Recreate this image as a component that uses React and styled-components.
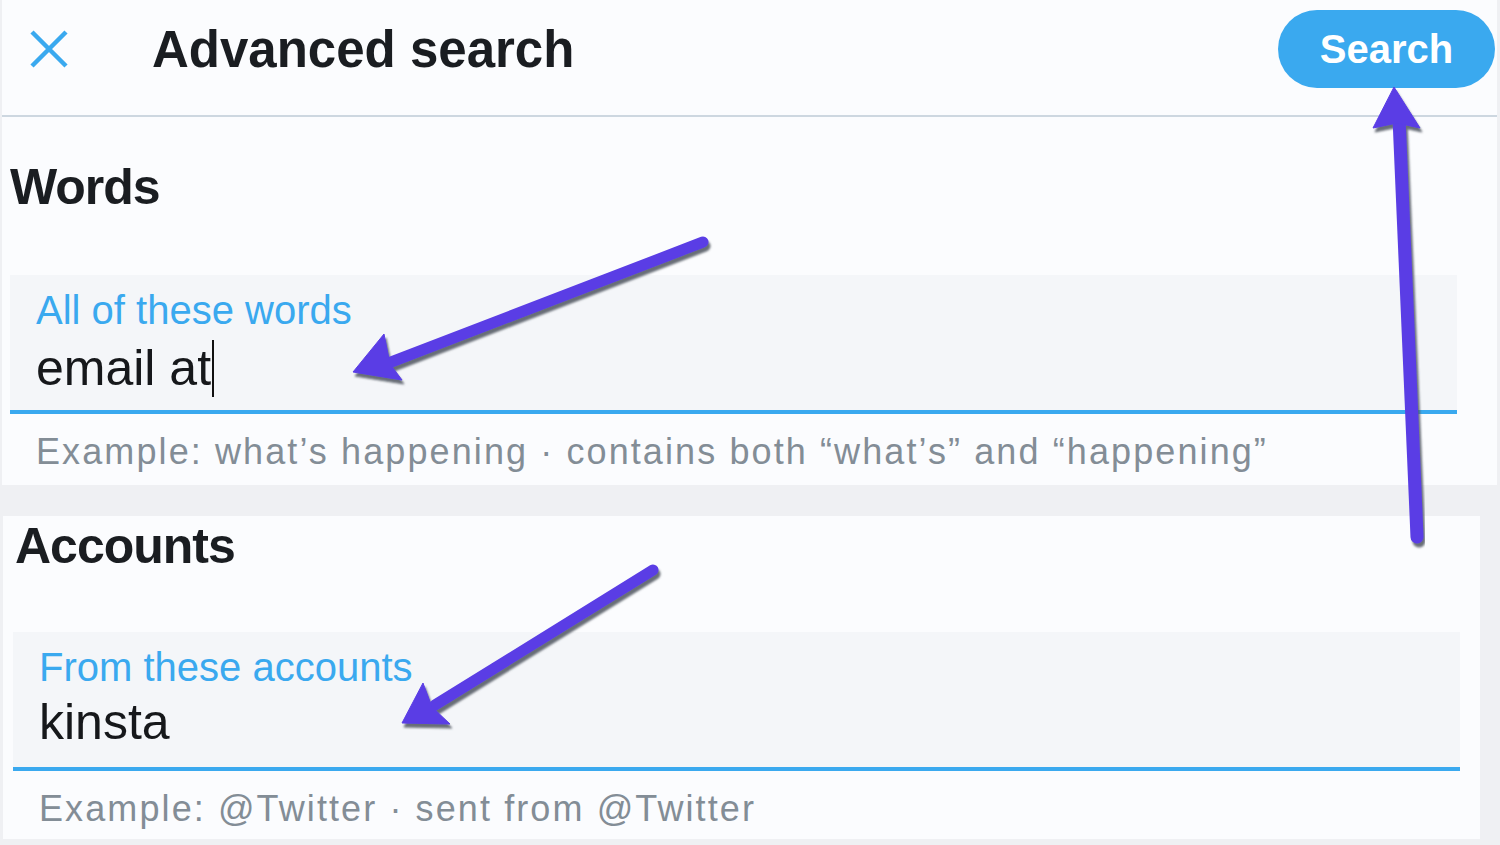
import React from 'react';
import styled, { createGlobalStyle } from 'styled-components';

const GlobalStyle = createGlobalStyle`
  html, body {
    margin: 0;
    padding: 0;
  }
  body {
    background: #eff0f3;
    font-family: "Liberation Sans", Arial, Helvetica, sans-serif;
    -webkit-font-smoothing: antialiased;
  }
`;

const Page = styled.div`
  position: relative;
  width: 1500px;
  height: 845px;
  overflow: hidden;
  background: #eff0f3;
  display: flex;
  flex-direction: column;
  gap: 31px;
`;

const Panel = styled.section`
  box-sizing: border-box;
  margin-left: ${p => p.$left}px;
  width: ${p => p.$width}px;
  height: ${p => p.$height}px;
  background: #fbfcfe;
  display: flex;
  flex-direction: column;
`;

const Header = styled.header`
  box-sizing: border-box;
  height: 117px;
  display: flex;
  align-items: center;
  padding: 10px 2px 27px 27px;
  border-bottom: 2px solid #cdd7e0;
`;

const CloseButton = styled.button`
  width: 40px;
  height: 40px;
  padding: 0;
  border: none;
  background: none;
  display: flex;
`;

const Title = styled.h1`
  margin: 0 0 0 83px;
  font-size: 51px;
  line-height: 51px;
  font-weight: 700;
  color: #1a1d21;
  flex: 1;
`;

const SearchButton = styled.button`
  width: 217px;
  height: 78px;
  border: none;
  border-radius: 39px;
  background: #3aa9ef;
  color: #fff;
  font-family: inherit;
  font-size: 40px;
  font-weight: 700;
  line-height: 1;
  padding: 0;
`;

const Section = styled.div`
  padding-left: ${p => p.$pad}px;
  display: flex;
  flex-direction: column;
`;

const Heading = styled.h2`
  margin: ${p => p.$top}px 0 0 ${p => p.$indent || 0}px;
  font-size: 50px;
  line-height: 50px;
  font-weight: 700;
  letter-spacing: -1px;
  color: #1a1d21;
`;

const Field = styled.div`
  box-sizing: border-box;
  margin-top: ${p => p.$top}px;
  width: 1447px;
  padding: 15px 26px 20px;
  background: #f4f6f9;
  border-bottom: 4px solid #3aa9ef;
  display: flex;
  flex-direction: column;
  gap: 10px;
`;

const Label = styled.div`
  font-size: 40px;
  line-height: 40px;
  color: #3aa9ef;
  height: 40px;
`;

const Value = styled.div`
  font-size: 50px;
  line-height: 50px;
  height: 50px;
  color: #16181b;
  white-space: nowrap;
`;

const Caret = styled.span`
  display: inline-block;
  width: 2px;
  height: 57px;
  margin-left: 1px;
  background: #111;
  vertical-align: -12px;
`;

const Hint = styled.div`
  margin: 20px 0 0 26px;
  font-size: 36px;
  line-height: 36px;
  letter-spacing: 2.1px;
  color: #838d96;
  white-space: nowrap;
`;

const Overlay = styled.svg`
  position: absolute;
  left: 0;
  top: 0;
  pointer-events: none;
`;

const arrows = [
  {
    shaft: [703, 242, 386, 364],
    width: 11,
    head: '353,372 384,334 390,364 402,380',
  },
  {
    shaft: [653, 570, 435, 705],
    width: 11,
    head: '402,723 423,683 432,707 450,724',
  },
  {
    shaft: [1399, 118, 1417, 537],
    width: 13,
    head: '1394,87 1373,128 1397,123 1420,128',
  },
];

function Arrows() {
  return (
    <Overlay width="1500" height="845" viewBox="0 0 1500 845">
      <defs>
        <filter id="shade" x="-10%" y="-10%" width="120%" height="120%">
          <feDropShadow dx="2" dy="4" stdDeviation="1.2" floodColor="#50545e" floodOpacity="0.85" />
        </filter>
      </defs>
      {arrows.map((a, i) => (
        <g key={i} filter="url(#shade)" fill="#5a3de5" stroke="#5a3de5">
          <line
            x1={a.shaft[0]}
            y1={a.shaft[1]}
            x2={a.shaft[2]}
            y2={a.shaft[3]}
            strokeWidth={a.width}
            strokeLinecap="round"
          />
          <polygon points={a.head} strokeWidth="1" strokeLinejoin="round" />
        </g>
      ))}
    </Overlay>
  );
}

export default function App() {
  return (
    <>
      <GlobalStyle />
      <Page>
        <Panel $left={2} $width={1495} $height={485}>
          <Header>
            <CloseButton aria-label="Close">
              <svg width="40" height="40" viewBox="0 0 40 40">
                <path d="M3 3 L37 37 M37 3 L3 37" stroke="#3aa9ef" strokeWidth="4.5" fill="none" />
              </svg>
            </CloseButton>
            <Title>Advanced search</Title>
            <SearchButton>Search</SearchButton>
          </Header>
          <Section $pad={8}>
            <Heading $top={45}>Words</Heading>
            <Field $top={63}>
              <Label>All of these words</Label>
              <Value>
                email at<Caret />
              </Value>
            </Field>
            <Hint>Example: what’s happening · contains both “what’s” and “happening”</Hint>
          </Section>
        </Panel>
        <Panel $left={3} $width={1477} $height={323}>
          <Section $pad={10}>
            <Heading $top={5} $indent={2}>Accounts</Heading>
            <Field $top={61}>
              <Label>From these accounts</Label>
              <Value>kinsta</Value>
            </Field>
            <Hint>Example: @Twitter · sent from @Twitter</Hint>
          </Section>
        </Panel>
        <Arrows />
      </Page>
    </>
  );
}
